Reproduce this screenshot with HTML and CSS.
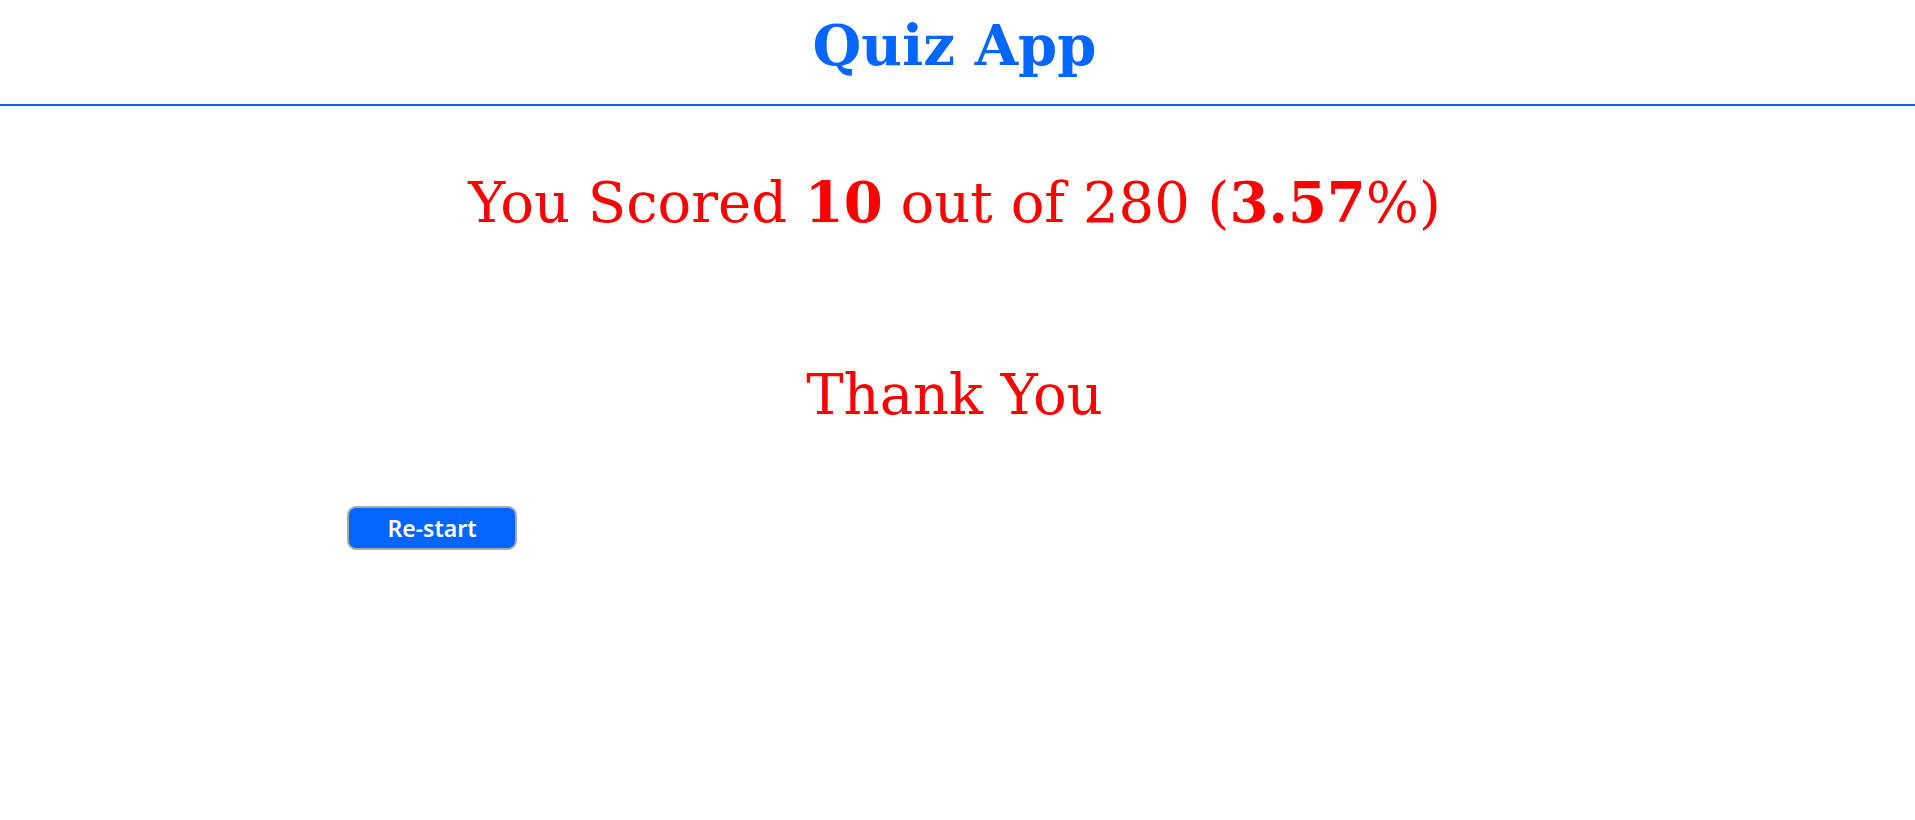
FILE: index.html
```html
<!DOCTYPE html>
<html>
<head>
<meta charset="utf-8">
<link rel="stylesheet" href="styles.css">
</head>
<body>
<header class="header">
  <h1 class="title">Quiz App</h1>
</header>
<main class="result">
  <p class="score">You Scored <b>10</b> out of 280 (<b>3.57</b>%)</p>
  <p class="thanks">Thank You</p>
  <div class="actions">
    <button class="restart">Re-start</button>
  </div>
</main>
</body>
</html>
```
FILE: styles.css
```css
html, body {
  margin: 0;
  padding: 0;
  background: #fff;
  font-family: "DejaVu Serif", serif;
}
.header {
  border-bottom: 2px solid #0066ff;
  height: 104px;
  display: flex;
  justify-content: center;
  padding-right: 6px;
}
.title {
  margin: 0;
  padding-top: 5px;
  color: #0066ff;
  font-size: 56px;
  line-height: 80px;
  font-weight: bold;
}
.result {
  display: flex;
  flex-direction: column;
}
.score {
  margin: 0;
  margin-top: 56px;
  padding-right: 6px;
  text-align: center;
  color: #ff0000;
  font-size: 56px;
  line-height: 80px;
}
.thanks {
  margin: 0;
  margin-top: 112px;
  padding-right: 6px;
  text-align: center;
  color: #ff0000;
  font-size: 56px;
  line-height: 80px;
}
.actions {
  padding-left: 347px;
  margin-top: 71px;
}
.restart {
  width: 170px;
  height: 44px;
  background: #0066ff;
  color: #fff;
  border: 2px solid #a9a9a9;
  border-radius: 9px;
  font-family: "Noto Sans", sans-serif;
  font-weight: 600;
  font-size: 23px;
  padding: 0;
  cursor: pointer;
}
```
